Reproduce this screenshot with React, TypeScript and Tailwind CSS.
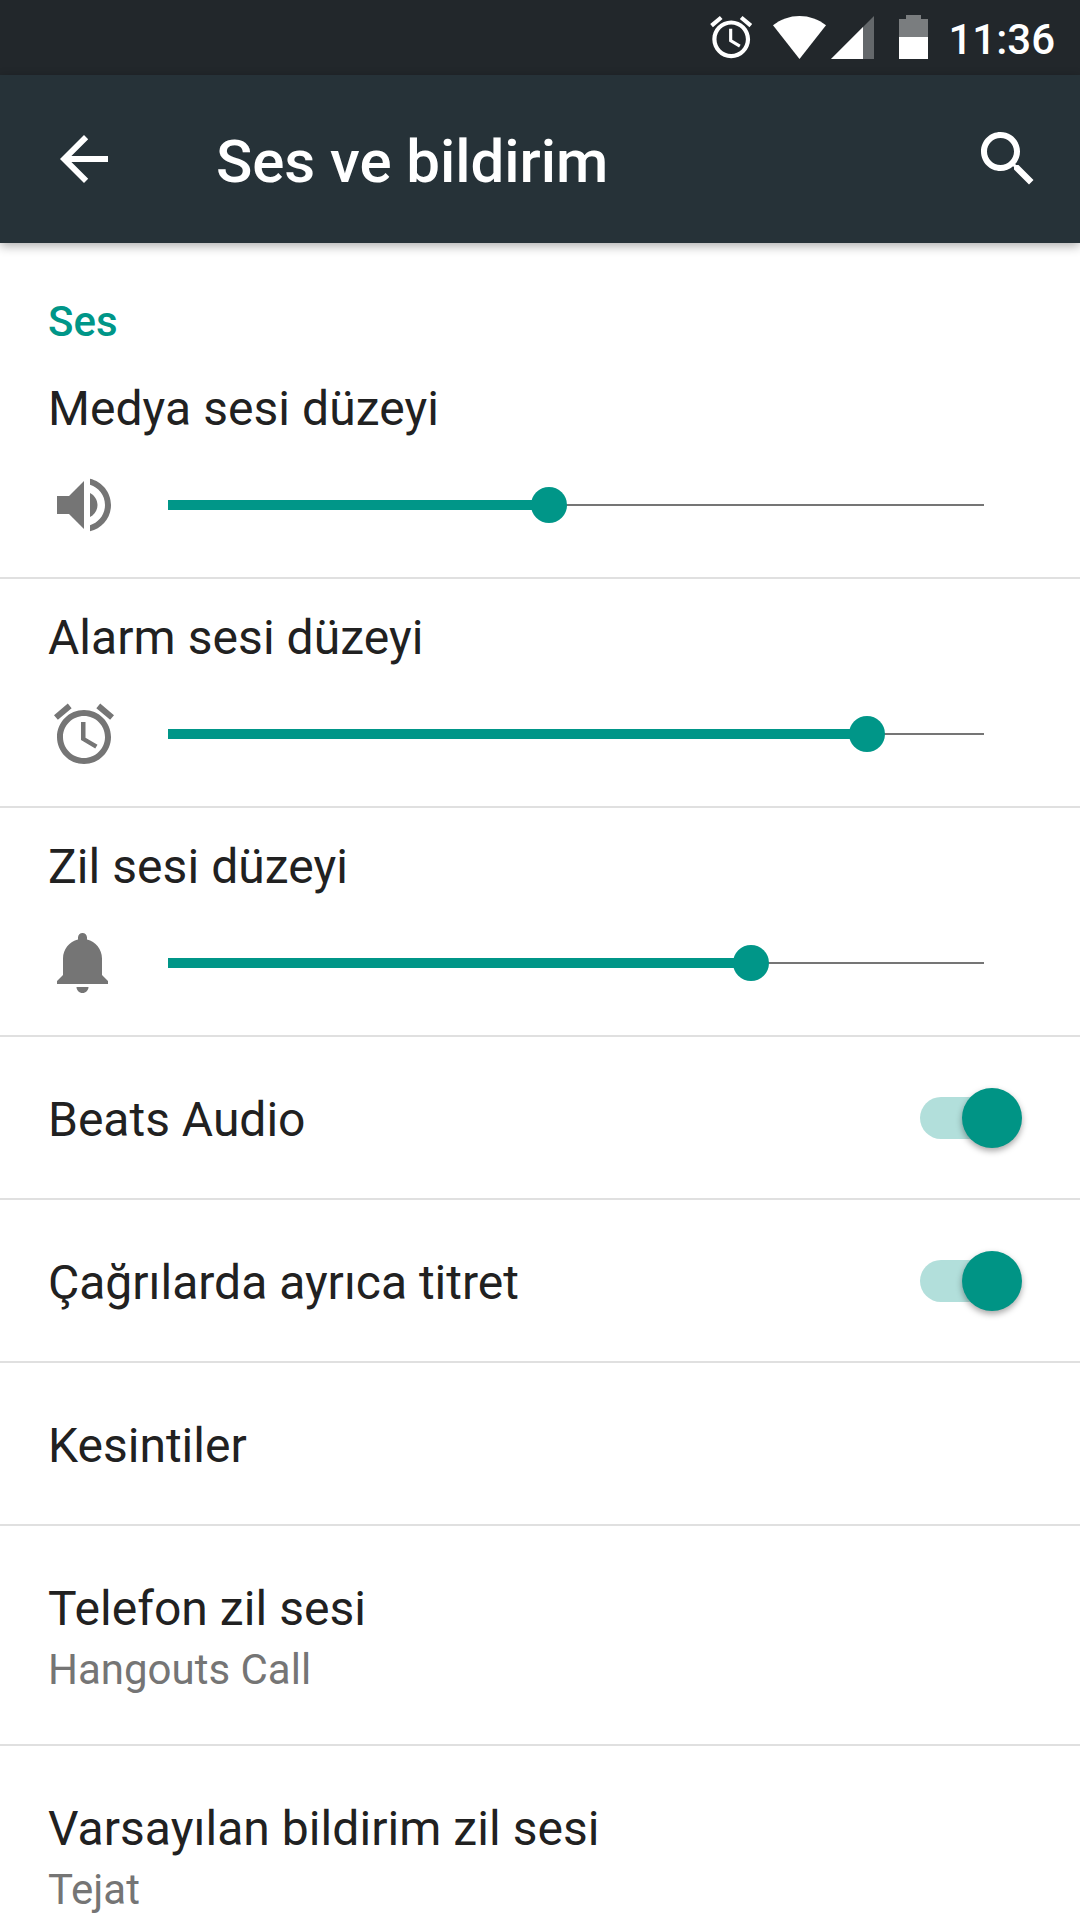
import type { ReactNode } from "react";

const ALARM_PATH =
    "M22 5.72l-4.6-3.86-1.29 1.53 4.6 3.86L22 5.72zM7.88 3.39L6.6 1.86 2 5.71l1.29 1.53 4.59-3.85zM12.5 8H11v6l4.75 2.85.75-1.23-4-2.37V8zM12 4c-4.97 0-9 4.03-9 9s4.02 9 9 9c4.97 0 9-4.03 9-9s-4.03-9-9-9zm0 16c-3.87 0-7-3.13-7-7s3.13-7 7-7 7 3.13 7 7-3.13 7-7 7z";

const volumes = [
    {
        title: "Medya sesi düzeyi",
        value: 7 / 15,
        icon: "M3 9v6h4l5 5V4L7 9H3zm13.5 3c0-1.77-1.02-3.29-2.5-4.03v8.05c1.48-.73 2.5-2.25 2.5-4.02zM14 3.23v2.06c2.89.86 5 3.54 5 6.71s-2.11 5.85-5 6.71v2.06c4.01-.91 7-4.49 7-8.77s-2.99-7.86-7-8.77z",
    },
    {
        title: "Alarm sesi düzeyi",
        value: 6 / 7,
        icon: ALARM_PATH,
    },
    {
        title: "Zil sesi düzeyi",
        value: 5 / 7,
        icon: "M11.5 22c1.1 0 2-.9 2-2h-4c0 1.1.9 2 2 2zm6.5-6v-5.5c0-3.07-2.13-5.64-5-6.32V3.5c0-.83-.67-1.5-1.5-1.5S10 2.67 10 3.5v.68c-2.87.68-5 3.25-5 6.32V16l-2 2v1h17v-1l-2-2z",
    },
];

const preferences = [
    { title: "Beats Audio", enabled: true },
    { title: "Çağrılarda ayrıca titret", enabled: true },
    { title: "Kesintiler" },
    { title: "Telefon zil sesi", summary: "Hangouts Call" },
    { title: "Varsayılan bildirim zil sesi", summary: "Tejat" },
];

function Icon({ path, className }: { path: string; className: string }) {
    return (
        <svg viewBox="0 0 24 24" fill="currentColor" className={className}>
            <path d={path} />
        </svg>
    );
}

function StatusBar() {
    return (
        <div className="flex h-[75px] items-start justify-end bg-[#22272b] pr-[25px] text-white">
            <Icon path={ALARM_PATH} className="mt-[12.4px] mr-[17px] size-[50.4px] shrink-0" />
            {/* Wi-Fi */}
            <svg viewBox="0 0 53 43" fill="currentColor" className="mt-4 mr-[5px] h-[43px] w-[53px] shrink-0">
                <path d="M26.5 43L0 9.2C7.6 3.4 16.6 0 26.5 0S45.4 3.4 53 9.2z" />
            </svg>
            {/* Signal */}
            <svg viewBox="0 0 43 43" fill="currentColor" className="mt-4 mr-[25px] h-[43px] w-[43px] shrink-0">
                <path d="M0 43L43 0v43z" opacity="0.3" />
                <path d="M0 43L32 11v32z" />
            </svg>
            {/* Battery */}
            <svg viewBox="0 0 29 44" fill="currentColor" className="mt-[15px] mr-[20px] h-[44px] w-[29px] shrink-0">
                <path d="M7 0h15v4h7v18H0V4h7z" opacity="0.4" />
                <path d="M0 22h29v22H0z" />
            </svg>
            <span className="mt-[12px] text-[42px] leading-[56px] font-medium">11:36</span>
        </div>
    );
}

function AppBar() {
    return (
        <header className="relative flex h-[168px] items-center bg-[#263238] pr-[36px] pl-[48px] text-white shadow-[0_3px_10px_rgba(0,0,0,0.32)]">
            <Icon path="M20 11H7.8l5.6-5.6L12 4l-8 8 8 8 1.4-1.4L7.8 13H20v-2z" className="size-[72px]" />
            <h1 className="ml-24 flex-1 pt-1.5 text-[60px] leading-[72px] font-medium tracking-[-0.05px]">
                Ses ve bildirim
            </h1>
            <Icon
                path="M15.5 14h-.8l-.3-.3c1-1.1 1.6-2.6 1.6-4.2C16 5.9 13.1 3 9.5 3S3 5.9 3 9.5 5.9 16 9.5 16c1.6 0 3.1-.6 4.2-1.6l.3.3v.8l5 5 1.5-1.5-5-5zm-6 0C7 14 5 12 5 9.5S7 5 9.5 5 14 7 14 9.5 12 14 9.5 14z"
                className="size-[72px]"
            />
        </header>
    );
}

function Slider({ value }: { value: number }) {
    const position = `${value * 100}%`;

    return (
        <div className="relative flex h-9 w-[816px] items-center">
            <div className="h-[10px] bg-[#009688]" style={{ width: position }} />
            <div className="h-[2px] flex-1 bg-[#757575]" />
            <div className="absolute top-0 size-9 -translate-x-1/2 rounded-full bg-[#009688]" style={{ left: position }} />
        </div>
    );
}

function Toggle() {
    return (
        <div className="relative flex h-[60px] w-[102px] items-center">
            <div className="h-[42px] w-[92px] rounded-full bg-[#b2dfdb]" />
            <div className="absolute top-0 right-[0.5px] size-[60px] rounded-full bg-[#009485] shadow-[0_3px_6px_rgba(0,0,0,0.35)]" />
        </div>
    );
}

function Row({ children, className }: { children: ReactNode; className: string }) {
    return <div className={`shrink-0 border-b-2 border-[#e0e0e0] px-[48px] ${className}`}>{children}</div>;
}

export default function App() {
    return (
        <div className="flex h-[1920px] w-[1080px] flex-col overflow-hidden bg-white font-['Roboto',sans-serif] text-[#212121]">
            <StatusBar />
            <AppBar />

            <main className="flex min-h-0 flex-1 flex-col overflow-hidden">
                <h2 className="h-[107px] shrink-0 px-[48px] pt-[51px] text-[42px] leading-[56px] font-medium text-[#009688]">
                    Ses
                </h2>

                {volumes.map((volume) => (
                    <Row key={volume.title} className="h-[229px] pt-[31px]">
                        <div className="text-5xl leading-[56px] tracking-[0.06px]">{volume.title}</div>
                        <div className="mt-8 flex items-center gap-12">
                            <Icon path={volume.icon} className="size-[72px] text-[#757575]" />
                            <Slider value={volume.value} />
                        </div>
                    </Row>
                ))}

                {preferences.map((item) => (
                    <Row
                        key={item.title}
                        className={item.summary ? "h-[220px] pt-[55px]" : "flex h-[163px] items-center justify-between pr-[58px]"}
                    >
                        <div
                            className={
                                item.summary
                                    ? "text-5xl leading-[56px] tracking-[0.06px]"
                                    : "pt-1 text-5xl leading-[56px]"
                            }
                        >
                            {item.title}
                        </div>
                        {item.summary && (
                            <div className="mt-[5px] text-[42px] leading-[56px] text-[#757575]">{item.summary}</div>
                        )}
                        {item.enabled && <Toggle />}
                    </Row>
                ))}
            </main>
        </div>
    );
}
